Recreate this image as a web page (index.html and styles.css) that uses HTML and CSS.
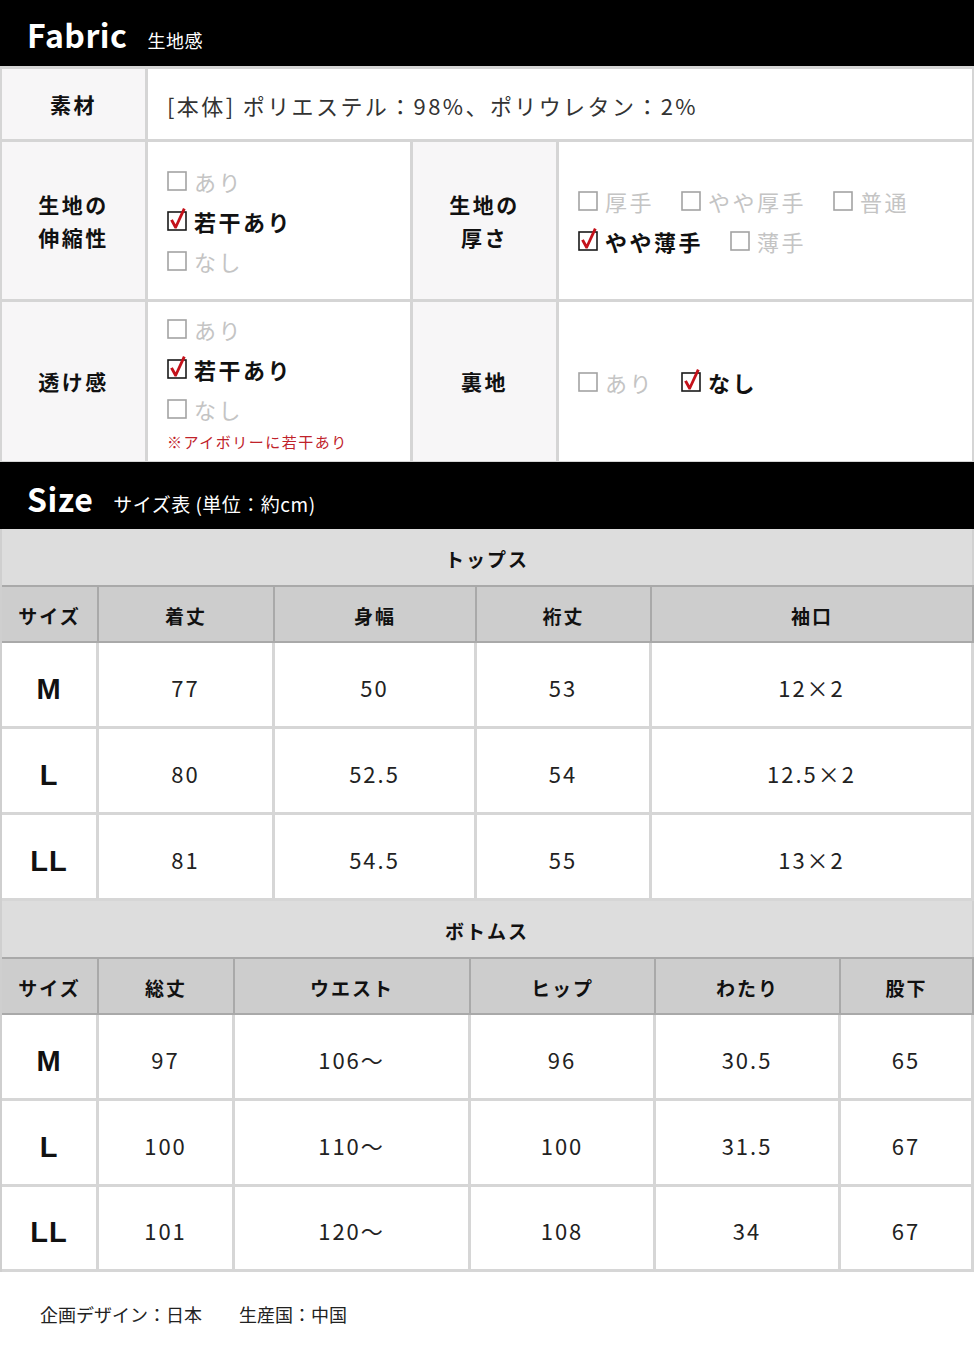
FILE: index.html
```html
<!DOCTYPE html>
<html lang="ja">
<head>
<meta charset="utf-8">
<title>Fabric / Size</title>
<link rel="stylesheet" href="styles.css">
</head>
<body>

<header class="bar bar-fabric">
  <h1 class="bar-title">Fabric</h1>
  <span class="bar-sub">生地感</span>
</header>

<section class="fabric">
  <div class="lbl">素材</div>
  <div class="val material">[本体] ポリエステル：98%、ポリウレタン：2%</div>

  <div class="lbl">生地の<br>伸縮性</div>
  <div class="val stack">
    <div class="opt off"><svg class="cb" viewBox="0 0 20 20"><rect x="1" y="1" width="18" height="18" fill="#fff" stroke="#a3a3a3" stroke-width="1.6"/></svg>あり</div>
    <div class="opt on"><svg class="cb" viewBox="0 0 20 20"><rect x="1" y="1" width="18" height="18" fill="#fff" stroke="#1a1a1a" stroke-width="1.6"/><path d="M3.2 9.6 L5.8 8.2 L8.6 13.2 L16 -3 L18.6 -1.8 L9.6 17.6 L7.6 17.6 Z" fill="#c4121b"/></svg>若干あり</div>
    <div class="opt off"><svg class="cb" viewBox="0 0 20 20"><rect x="1" y="1" width="18" height="18" fill="#fff" stroke="#a3a3a3" stroke-width="1.6"/></svg>なし</div>
  </div>
  <div class="lbl">生地の<br>厚さ</div>
  <div class="val flow">
    <div class="opt off"><svg class="cb" viewBox="0 0 20 20"><rect x="1" y="1" width="18" height="18" fill="#fff" stroke="#a3a3a3" stroke-width="1.6"/></svg>厚手</div>
    <div class="opt off"><svg class="cb" viewBox="0 0 20 20"><rect x="1" y="1" width="18" height="18" fill="#fff" stroke="#a3a3a3" stroke-width="1.6"/></svg>やや厚手</div>
    <div class="opt off"><svg class="cb" viewBox="0 0 20 20"><rect x="1" y="1" width="18" height="18" fill="#fff" stroke="#a3a3a3" stroke-width="1.6"/></svg>普通</div>
    <div class="opt on"><svg class="cb" viewBox="0 0 20 20"><rect x="1" y="1" width="18" height="18" fill="#fff" stroke="#1a1a1a" stroke-width="1.6"/><path d="M3.2 9.6 L5.8 8.2 L8.6 13.2 L16 -3 L18.6 -1.8 L9.6 17.6 L7.6 17.6 Z" fill="#c4121b"/></svg>やや薄手</div>
    <div class="opt off"><svg class="cb" viewBox="0 0 20 20"><rect x="1" y="1" width="18" height="18" fill="#fff" stroke="#a3a3a3" stroke-width="1.6"/></svg>薄手</div>
  </div>

  <div class="lbl">透け感</div>
  <div class="val stack">
    <div class="opt off"><svg class="cb" viewBox="0 0 20 20"><rect x="1" y="1" width="18" height="18" fill="#fff" stroke="#a3a3a3" stroke-width="1.6"/></svg>あり</div>
    <div class="opt on"><svg class="cb" viewBox="0 0 20 20"><rect x="1" y="1" width="18" height="18" fill="#fff" stroke="#1a1a1a" stroke-width="1.6"/><path d="M3.2 9.6 L5.8 8.2 L8.6 13.2 L16 -3 L18.6 -1.8 L9.6 17.6 L7.6 17.6 Z" fill="#c4121b"/></svg>若干あり</div>
    <div class="opt off"><svg class="cb" viewBox="0 0 20 20"><rect x="1" y="1" width="18" height="18" fill="#fff" stroke="#a3a3a3" stroke-width="1.6"/></svg>なし</div>
    <div class="note">※アイボリーに若干あり</div>
  </div>
  <div class="lbl">裏地</div>
  <div class="val flow">
    <div class="opt off"><svg class="cb" viewBox="0 0 20 20"><rect x="1" y="1" width="18" height="18" fill="#fff" stroke="#a3a3a3" stroke-width="1.6"/></svg>あり</div>
    <div class="opt on"><svg class="cb" viewBox="0 0 20 20"><rect x="1" y="1" width="18" height="18" fill="#fff" stroke="#1a1a1a" stroke-width="1.6"/><path d="M3.2 9.6 L5.8 8.2 L8.6 13.2 L16 -3 L18.6 -1.8 L9.6 17.6 L7.6 17.6 Z" fill="#c4121b"/></svg>なし</div>
  </div>
</section>

<header class="bar bar-size">
  <h1 class="bar-title">Size</h1>
  <span class="bar-sub">サイズ表 (単位：約cm)</span>
</header>

<section class="size-table tops">
  <div class="cap">トップス</div>
  <div class="th">サイズ</div><div class="th">着丈</div><div class="th">身幅</div><div class="th">裄丈</div><div class="th">袖口</div>
  <div class="td sz">M</div><div class="td">77</div><div class="td">50</div><div class="td">53</div><div class="td">12×2</div>
  <div class="td sz">L</div><div class="td">80</div><div class="td">52.5</div><div class="td">54</div><div class="td">12.5×2</div>
  <div class="td sz">LL</div><div class="td">81</div><div class="td">54.5</div><div class="td">55</div><div class="td">13×2</div>
</section>

<section class="size-table bottoms">
  <div class="cap">ボトムス</div>
  <div class="th">サイズ</div><div class="th">総丈</div><div class="th">ウエスト</div><div class="th">ヒップ</div><div class="th">わたり</div><div class="th">股下</div>
  <div class="td sz">M</div><div class="td">97</div><div class="td">106～</div><div class="td">96</div><div class="td">30.5</div><div class="td">65</div>
  <div class="td sz">L</div><div class="td">100</div><div class="td">110～</div><div class="td">100</div><div class="td">31.5</div><div class="td">67</div>
  <div class="td sz">LL</div><div class="td">101</div><div class="td">120～</div><div class="td">108</div><div class="td">34</div><div class="td">67</div>
</section>

<footer class="origin">
  <span>企画デザイン：日本</span>
  <span>生産国：中国</span>
</footer>
</body>
</html>
```

FILE: styles.css
```css
* { box-sizing: border-box; }

html, body {
  margin: 0;
  padding: 0;
  background: #fff;
}

body {
  font-family: "Noto Sans CJK JP", "Noto Sans", sans-serif;
  color: #111;
  width: 974px;
}

/* ---------- black section bars ---------- */
.bar {
  background: #000;
  color: #fff;
  display: flex;
  align-items: baseline;
  padding-left: 27px;
}
.bar-fabric { height: 66px; padding-top: 18px; }
.bar-size { height: 67px; padding-top: 20px; }

.bar-title {
  margin: 0;
  font-size: 32px;
  line-height: 1;
  font-weight: 700;
  letter-spacing: 0.5px;
}
.bar-sub {
  font-size: 18px;
  line-height: 1;
  font-weight: 400;
  letter-spacing: 0.5px;
}
.bar-fabric .bar-sub { margin-left: 20px; }
.bar-size .bar-sub { margin-left: 20px; font-size: 19px; }

/* ---------- fabric grid ---------- */
.fabric {
  display: grid;
  grid-template-columns: 143px 262px 143px 1fr;
  grid-template-rows: 70px 157px 159px;
  gap: 3px;
  padding: 3px 2px 1px 2px;
  background: #d5d5d5;
}

.lbl {
  background: #f7f6f7;
  display: flex;
  align-items: center;
  justify-content: center;
  text-align: center;
  font-size: 21px;
  font-weight: 700;
  line-height: 33px;
  letter-spacing: 2.5px;
  color: #111;
}

.val {
  background: #fff;
  padding-left: 19px;
}

.material {
  grid-column: 2 / -1;
  display: flex;
  align-items: center;
  font-size: 22px;
  letter-spacing: 2.4px;
  color: #333;
  padding-top: 1px;
}

.stack {
  display: flex;
  flex-direction: column;
  justify-content: center;
}

.flow {
  display: flex;
  flex-wrap: wrap;
  align-content: center;
  column-gap: 27px;
}

.opt {
  display: flex;
  align-items: center;
  height: 40px;
  font-size: 22px;
  letter-spacing: 2.5px;
}
.opt .cb {
  width: 20px;
  height: 20px;
  margin-right: 7px;
  flex: none;
  overflow: visible;
}
.opt.off { color: #c4c4c4; font-weight: 400; }
.opt.on { color: #111; font-weight: 700; }

.note {
  font-size: 15px;
  line-height: 24px;
  color: #c0222a;
  letter-spacing: 1.5px;
  margin-top: 1px;
}

/* ---------- size tables ---------- */
.size-table {
  display: grid;
  border-left: 2px solid #cfcfcf;
}
.tops {
  grid-template-columns: 97px 176px 202px 175px 1fr;
  grid-template-rows: 56px 58px repeat(3, 86px);
}
.bottoms {
  grid-template-columns: 97px 136px 236px 185px 185px 1fr;
  grid-template-rows: 56px 58px 86px 86px 85px;
}

.cap {
  grid-column: 1 / -1;
  background: #dddddd;
  border-right: 2px solid #d0d0d0;
  display: flex;
  align-items: center;
  justify-content: center;
  font-size: 19px;
  font-weight: 700;
  letter-spacing: 2px;
  color: #111;
  padding-top: 2px;
}

.th {
  background: #cdcdcd;
  border-top: 2px solid #a9a9a9;
  border-right: 2px solid #a9a9a9;
  border-bottom: 2px solid #a9a9a9;
  display: flex;
  align-items: center;
  justify-content: center;
  font-size: 19px;
  font-weight: 700;
  letter-spacing: 2px;
  color: #111;
  padding-top: 2px;
}

.td {
  background: #fff;
  border-right: 3px solid #d6d6d6;
  border-bottom: 3px solid #d6d6d6;
  display: flex;
  align-items: center;
  justify-content: center;
  font-size: 22px;
  letter-spacing: 2px;
  color: #222;
  padding-top: 4px;
}

.td.sz {
  font-family: "Liberation Sans", Arial, sans-serif;
  font-weight: 700;
  font-size: 29px;
  letter-spacing: 1px;
  color: #111;
  padding-top: 9px;
}

/* ---------- footer ---------- */
.origin {
  padding: 29px 0 0 40px;
  font-size: 18px;
  line-height: 26px;
  color: #222;
  display: flex;
  gap: 37px;
}
```
